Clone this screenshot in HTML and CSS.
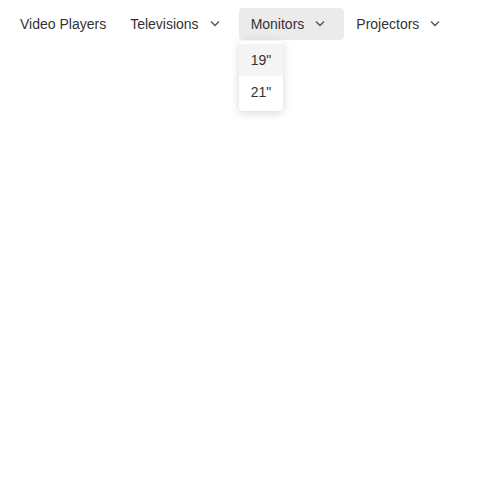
FILE: index.html
```html
<!DOCTYPE html>
<html>
<head>
<meta charset="utf-8">
<link rel="stylesheet" href="styles.css">
</head>
<body>
<nav class="menubar">
  <div class="item"><span>Video Players</span></div>
  <div class="item"><span>Televisions</span><svg class="chev" width="18" height="14" viewBox="0 0 18 14"><path d="M3 4.5 L7 8.5 L11 4.5" fill="none" stroke="#555" stroke-width="1.4"/></svg></div>
  <div class="group">
    <div class="item open"><span>Monitors</span><svg class="chev" width="18" height="14" viewBox="0 0 18 14"><path d="M3 4.5 L7 8.5 L11 4.5" fill="none" stroke="#555" stroke-width="1.4"/></svg></div>
    <div class="dropdown">
      <div class="opt active">19&quot;</div>
      <div class="opt">21&quot;</div>
    </div>
  </div>
  <div class="item"><span>Projectors</span><svg class="chev" width="18" height="14" viewBox="0 0 18 14"><path d="M3 4.5 L7 8.5 L11 4.5" fill="none" stroke="#555" stroke-width="1.4"/></svg></div>
</nav>
</body>
</html>
```
FILE: styles.css
```css
html, body { margin: 0; padding: 0; background: #fff; }
body { min-height: 100vh; font-family: "Liberation Sans", Arial, sans-serif; font-size: 14px; color: #333; }
.menubar { display: flex; align-items: flex-start; padding: 8px 8px 0 8px; }
.group { display: flex; flex-direction: column; gap: 1px; }
.item { display: flex; align-items: center; flex-shrink: 0; height: 32px; padding: 0 13px 0 12px; border-radius: 4px; }
.item:first-child { padding-right: 12px; }
.item.open { background: #ebebeb; padding-right: 13px; }
.chev { margin-left: 9px; display: block; }
.dropdown {
  align-self: flex-start;
  background: #ffffff; padding: 3px 0; border-radius: 4px;
  box-shadow: 0 2px 10px rgba(0,0,0,0.16);
}
.opt { height: 32px; line-height: 32px; padding: 0 12px; white-space: nowrap; color: #333; }
.opt.active { background: #f4f4f4; }
```
